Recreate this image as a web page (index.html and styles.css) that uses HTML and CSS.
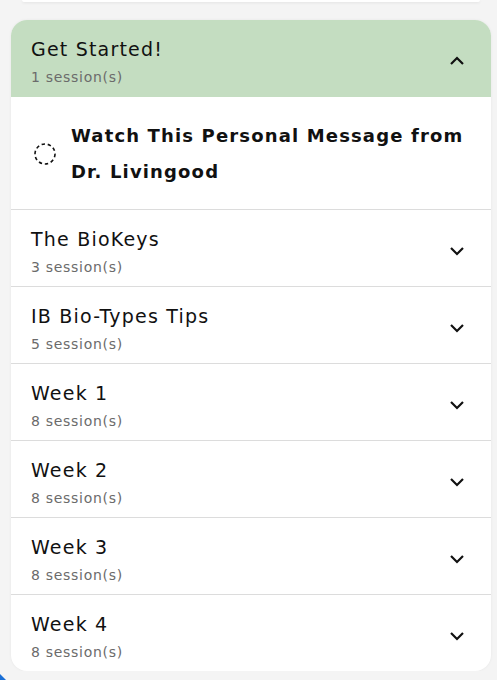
FILE: index.html
```html
<!DOCTYPE html>
<html lang="en">

<head>
    <meta charset="UTF-8">
    <meta name="viewport" content="width=device-width, initial-scale=1.0">
    <title>Program</title>
    <link rel="stylesheet" href="styles.css">
</head>

<body>
    <div class="prev-card"></div>

    <div class="modules">
        <div class="module open">
            <div class="module-head">
                <div class="module-info">
                    <div class="module-title">Get Started!</div>
                    <div class="module-count">1 session(s)</div>
                </div>
                <svg class="chevron" width="16" height="10" viewBox="0 0 16 10"><path d="M2 8 L8 2 L14 8" fill="none" stroke="#111" stroke-width="2.2"/></svg>
            </div>
            <div class="session">
                <svg class="status" width="24" height="24" viewBox="0 0 24 24"><circle cx="12" cy="12" r="10" fill="none" stroke="#111" stroke-width="1.6" stroke-dasharray="3.4 2.8"/></svg>
                <div class="session-title">Watch This Personal Message from Dr. Livingood</div>
            </div>
        </div>

        <div class="module">
            <div class="module-head">
                <div class="module-info">
                    <div class="module-title">The BioKeys</div>
                    <div class="module-count">3 session(s)</div>
                </div>
                <svg class="chevron" width="16" height="10" viewBox="0 0 16 10"><path d="M2 2 L8 8 L14 2" fill="none" stroke="#111" stroke-width="2.2"/></svg>
            </div>
        </div>

        <div class="module">
            <div class="module-head">
                <div class="module-info">
                    <div class="module-title">IB Bio-Types Tips</div>
                    <div class="module-count">5 session(s)</div>
                </div>
                <svg class="chevron" width="16" height="10" viewBox="0 0 16 10"><path d="M2 2 L8 8 L14 2" fill="none" stroke="#111" stroke-width="2.2"/></svg>
            </div>
        </div>

        <div class="module">
            <div class="module-head">
                <div class="module-info">
                    <div class="module-title">Week 1</div>
                    <div class="module-count">8 session(s)</div>
                </div>
                <svg class="chevron" width="16" height="10" viewBox="0 0 16 10"><path d="M2 2 L8 8 L14 2" fill="none" stroke="#111" stroke-width="2.2"/></svg>
            </div>
        </div>

        <div class="module">
            <div class="module-head">
                <div class="module-info">
                    <div class="module-title">Week 2</div>
                    <div class="module-count">8 session(s)</div>
                </div>
                <svg class="chevron" width="16" height="10" viewBox="0 0 16 10"><path d="M2 2 L8 8 L14 2" fill="none" stroke="#111" stroke-width="2.2"/></svg>
            </div>
        </div>

        <div class="module">
            <div class="module-head">
                <div class="module-info">
                    <div class="module-title">Week 3</div>
                    <div class="module-count">8 session(s)</div>
                </div>
                <svg class="chevron" width="16" height="10" viewBox="0 0 16 10"><path d="M2 2 L8 8 L14 2" fill="none" stroke="#111" stroke-width="2.2"/></svg>
            </div>
        </div>

        <div class="module">
            <div class="module-head">
                <div class="module-info">
                    <div class="module-title">Week 4</div>
                    <div class="module-count">8 session(s)</div>
                </div>
                <svg class="chevron" width="16" height="10" viewBox="0 0 16 10"><path d="M2 2 L8 8 L14 2" fill="none" stroke="#111" stroke-width="2.2"/></svg>
            </div>
        </div>
    </div>

    <div class="corner"></div>
</body>

</html>
```

FILE: styles.css
```css
body {
    font-family: "DejaVu Sans", "Noto Sans", sans-serif;
    background-color: #f4f4f4;
    margin: 0;
    padding: 0 6px 0 11px;
    color: #111;
}

.prev-card {
    height: 2px;
    margin: 0 11px 18px 11px;
    background-color: #fff;
    border-radius: 0 0 12px 12px;
    box-shadow: 0 1px 3px rgba(0, 0, 0, 0.08);
}

.modules {
    background-color: #fff;
    border-radius: 16px;
    overflow: hidden;
    box-shadow: 0 0 3px rgba(0, 0, 0, 0.06);
}

.module {
    border-bottom: 1px solid #dcdcdc;
}

.module:last-child {
    border-bottom: none;
}

.module-head {
    display: flex;
    align-items: center;
    justify-content: space-between;
    padding: 16px 26px 10px 20px;
    height: 50px;
}

.open .module-head {
    background-color: #c4ddc1;
    padding-bottom: 11px;
}

.module-title {
    font-size: 19px;
    line-height: 26px;
    letter-spacing: 1.2px;
}

.module-count {
    font-size: 14px;
    line-height: 18px;
    margin-top: 6px;
    color: #6b6b6b;
    letter-spacing: 0.7px;
}

.session {
    display: flex;
    align-items: center;
    gap: 14px;
    padding: 21px 20px 19px 22px;
}

.status {
    flex-shrink: 0;
}

.session-title {
    font-size: 18px;
    font-weight: 700;
    line-height: 36px;
    letter-spacing: 1.15px;
}

.corner {
    position: fixed;
    left: 0;
    bottom: 0;
    width: 0;
    height: 0;
    border-left: 6px solid #1a6fd6;
    border-top: 6px solid transparent;
}
```
